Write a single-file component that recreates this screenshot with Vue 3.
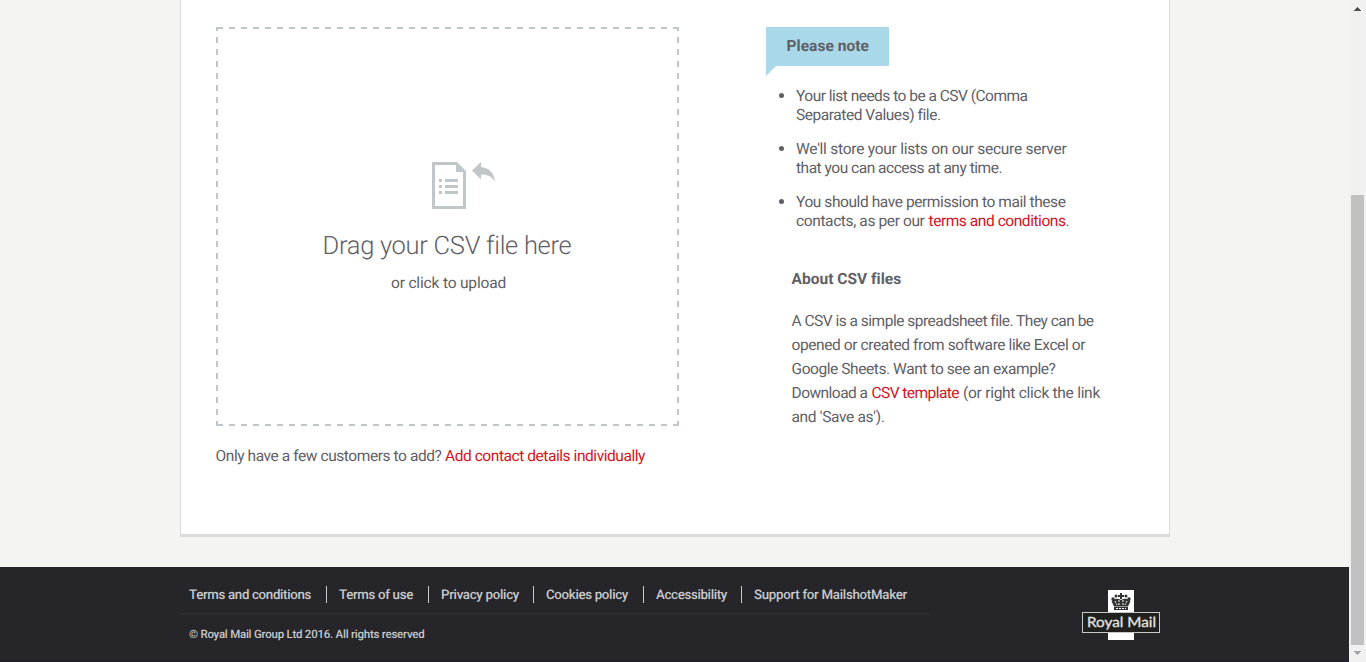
<script setup>
const notes = [
  [[{ text: 'Your list needs to be a CSV (Comma', width: 231.5 }], [{ text: 'Separated Values) file.', width: 144 }]],
  [[{ text: "We'll store your lists on our secure server", width: 270.5 }], [{ text: 'that you can access at any time.', width: 206 }]],
  [
    [{ text: 'You should have permission to mail these', width: 269.5 }],
    [{ text: 'contacts, as per our', width: 128.5 }, { text: 'terms and conditions', width: 137, link: true, gap: 4 }, { text: '.', width: 4, gap: 0 }],
  ],
]

const about = [
  [{ text: 'A CSV is a simple spreadsheet file. They can be', width: 301.5 }],
  [{ text: 'opened or created from software like Excel or', width: 293.5 }],
  [{ text: 'Google Sheets. Want to see an example?', width: 264 }],
  [{ text: 'Download a', width: 76 }, { text: 'CSV template', width: 87.5, link: true, gap: 4 }, { text: '(or right click the link', width: 137, gap: 4 }],
  [{ text: "and 'Save as').", width: 93 }],
]

const footerLinks = [
  { text: 'Terms and conditions', width: 122 },
  { text: 'Terms of use', width: 74 },
  { text: 'Privacy policy', width: 78 },
  { text: 'Cookies policy', width: 82 },
  { text: 'Accessibility', width: 71 },
  { text: 'Support for MailshotMaker', width: 153 },
]

// Tracks a run of text so that it occupies the given width.
const vFit = {
  mounted(el, { value }) {
    const count = el.textContent.length
    if (count < 2) return
    const natural = el.getBoundingClientRect().width
    el.style.letterSpacing = `${(value - natural) / count}px`
  },
}
</script>

<template>
  <div class="window">
    <div class="page">
      <main class="card">
        <section class="upload">
          <div class="dropzone">
            <svg class="file-icon" width="64" height="48" viewBox="0 0 64 48">
              <path fill="#c1c7c9" fill-rule="evenodd" d="M0 0H25L34 9V47H0ZM3 3V44H31V10H24V3Z" />
              <path fill="#c1c7c9" d="M7 17h3v3H7zM13 17h13v3H13zM7 23h3v3H7zM13 23h13v3H13zM7 29h3v3H7zM13 29h13v3H13z" />
              <path fill="#c1c7c9" d="M40 8.500 49 0V5C56 5.500 62 10 63 19.500C59 14 55 12.500 49 12.500V17.500Z" />
            </svg>
            <h2><span v-fit="248.5">Drag your CSV file here</span></h2>
            <p><span v-fit="115">or click to upload</span></p>
          </div>
          <p class="few">
            <span v-fit="226">Only have a few customers to add?</span>
            <a v-fit="200">Add contact details individually</a>
          </p>
        </section>

        <aside class="info">
          <div class="note-title"><span v-fit="82.5">Please note</span></div>
          <ul>
            <li v-for="(note, n) in notes" :key="n">
              <div v-for="(line, l) in note" :key="l" class="line">
                <component :is="part.link ? 'a' : 'span'" v-for="part in line" :key="part.text" v-fit="part.width" :class="{ spaced: part.gap }">{{ part.text }}</component>
              </div>
            </li>
          </ul>
          <div class="about">
            <h3><span v-fit="109.5">About CSV files</span></h3>
            <div v-for="(line, l) in about" :key="l" class="line">
              <component :is="part.link ? 'a' : 'span'" v-for="part in line" :key="part.text" v-fit="part.width" :class="{ spaced: part.gap }">{{ part.text }}</component>
            </div>
          </div>
        </aside>
      </main>

      <footer>
        <div class="footer-inner">
          <div class="footer-text">
            <nav>
              <div v-for="item in footerLinks" :key="item.text" class="nav-item"><span v-fit="item.width">{{ item.text }}</span></div>
            </nav>
            <p class="copyright"><span v-fit="235.5">© Royal Mail Group Ltd 2016. All rights reserved</span></p>
          </div>
          <svg class="logo" width="78" height="50" viewBox="0 0 78 50">
            <rect x="26" width="26" height="50" fill="#fff" />
            <g fill="#303131">
              <path d="M38 3h2v2h2v2h-2v2h-2V7h-2V5h2z" />
              <circle cx="34" cy="6" r="1.500" /><circle cx="44" cy="6" r="1.500" />
              <circle cx="31" cy="9" r="1.700" /><circle cx="47" cy="9" r="1.700" />
              <path d="M29.500 11q4.500-4 9.500-1q5-3 9.500 1l-2.500 5.500H32z" />
              <path d="M32 17h14v3H32z" />
            </g>
            <path d="M33 11l2 4M37 10v5M41 10v5M45 11l-2 4M34 18.500h10" stroke="#fff" stroke-width="1" stroke-dasharray="2 1" />
            <rect x=".5" y="22.500" width="77" height="20" fill="#20211f" stroke="#c9c9c9" />
            <text x="5" y="36.500" textLength="69" lengthAdjust="spacingAndGlyphs">Royal Mail</text>
          </svg>
        </div>
      </footer>
    </div>

    <div class="scrollbar">
      <svg width="17" height="17" viewBox="0 0 17 17" shape-rendering="crispEdges"><path fill="#505050" d="M8 7h1v1h1v1h1v1h1v1H5v-1h1V9h1V8h1z" /></svg>
      <div class="thumb"></div>
      <svg width="17" height="17" viewBox="0 0 17 17" shape-rendering="crispEdges"><path fill="#a3a3a3" d="M5 6h7v1h-1v1h-1v1H9v1H8V9H7V8H6V7H5z" /></svg>
    </div>
  </div>
</template>

<style>
html,
body {
  overflow: hidden;
}
</style>

<style scoped>
.window {
  display: flex;
  width: 1366px;
  height: 662px;
  overflow: hidden;
  background: #f4f4f2;
  color: #5f6066;
  font: 15.5px/19px Roboto, "Liberation Sans", sans-serif;
  text-rendering: geometricPrecision;
}
.window * {
  box-sizing: border-box;
}
span,
a {
  display: inline-block;
  white-space: nowrap;
}
a {
  color: #d2131f;
}
h2,
h3,
p,
ul {
  margin: 0;
  padding: 0;
}
.page {
  display: flex;
  flex-direction: column;
  width: 1349px;
}
.card {
  display: flex;
  width: 990px;
  height: 537px;
  margin: 0 0 30px 180px;
  padding: 27px 0 0 35px;
  background: #fff;
  border: solid #dadbda;
  border-width: 0 1px 3px;
}
.upload {
  width: 463px;
}
.dropzone {
  --dash-x: linear-gradient(90deg, #c1c7c9 6px, transparent 6px);
  --dash-y: linear-gradient(#c1c7c9 6px, transparent 6px);
  display: flex;
  flex-direction: column;
  align-items: center;
  height: 399px;
  padding-top: 135px;
  background-image: var(--dash-x), var(--dash-x), var(--dash-y), var(--dash-y);
  background-position: 1px 0, 1px 100%, 0 -2px, 100% -2px;
  background-repeat: repeat-x, repeat-x, repeat-y, repeat-y;
  background-size: 12px 2px, 12px 2px, 2px 12px, 2px 12px;
}
.file-icon {
  margin-left: 33px;
}
h2 {
  margin-top: 20px;
  font-size: 25.5px;
  font-weight: 300;
  line-height: 32px;
}
.dropzone h2 span {
  margin-left: -1px;
}
.dropzone p {
  margin: 12px 0 0 2px;
}
.few {
  display: flex;
  gap: 3.5px;
  margin: 21px 0 0 -0.5px;
}
.info {
  width: 350px;
  margin-left: 87px;
}
.note-title {
  position: relative;
  width: 123px;
  height: 39px;
  padding: 10px 0 0 20.5px;
  background: #a9d8e8;
  font-weight: 700;
}
.note-title::after {
  position: absolute;
  top: 39px;
  left: 0;
  width: 10px;
  height: 10px;
  background: #a9d8e8;
  clip-path: polygon(0 0, 100% 0, 0 100%);
  content: "";
}
ul {
  display: flex;
  flex-direction: column;
  gap: 15px;
  margin-top: 21px;
  padding-left: 30px;
  list-style: none;
}
li {
  position: relative;
}
li::before {
  position: absolute;
  top: 6px;
  left: -17px;
  width: 5px;
  height: 5px;
  border-radius: 50%;
  background: #5f6066;
  content: "";
}
.line {
  display: flex;
}
.spaced {
  margin-left: 4px;
}
.about {
  margin: 39px 0 0 25.5px;
  line-height: 24px;
}
h3 {
  margin-bottom: 20px;
  font-size: 15.5px;
  line-height: 19px;
}
footer {
  flex: none;
  height: 95px;
  background: #26252a;
  border-bottom: 2px solid #221f28;
}
.footer-inner {
  display: flex;
  justify-content: space-between;
  width: 980px;
  margin-left: 180px;
  padding-top: 19px;
  color: #c6cacc;
}
.footer-text {
  width: 749px;
}
nav {
  display: flex;
  height: 29px;
  padding-left: 9px;
  border-bottom: 2px solid #2d2d32;
  font-size: 13.3px;
  font-weight: 500;
  line-height: 19px;
}
.nav-item {
  height: 17px;
  padding-right: 15px;
}
.nav-item + .nav-item {
  padding-left: 12px;
  border-left: 1px solid #c6cacc;
}
.nav-item:nth-child(3),
.nav-item:nth-child(5) {
  padding-right: 14px;
}
.copyright {
  padding: 10px 0 0 9px;
  font-size: 11.5px;
  font-weight: 500;
  line-height: 18px;
}
.logo {
  margin-top: 4px;
}
.logo text {
  fill: #e4e4e2;
  font: 400 14px Lato, sans-serif;
  stroke: #e4e4e2;
  stroke-width: 0.3px;
}
.scrollbar {
  display: flex;
  flex-direction: column;
  justify-content: space-between;
  width: 17px;
  background: #f1f1f1;
}
.thumb {
  width: 13px;
  height: 450px;
  margin: 178px 0 0 2px;
  background: #c1c1c1;
}
</style>
